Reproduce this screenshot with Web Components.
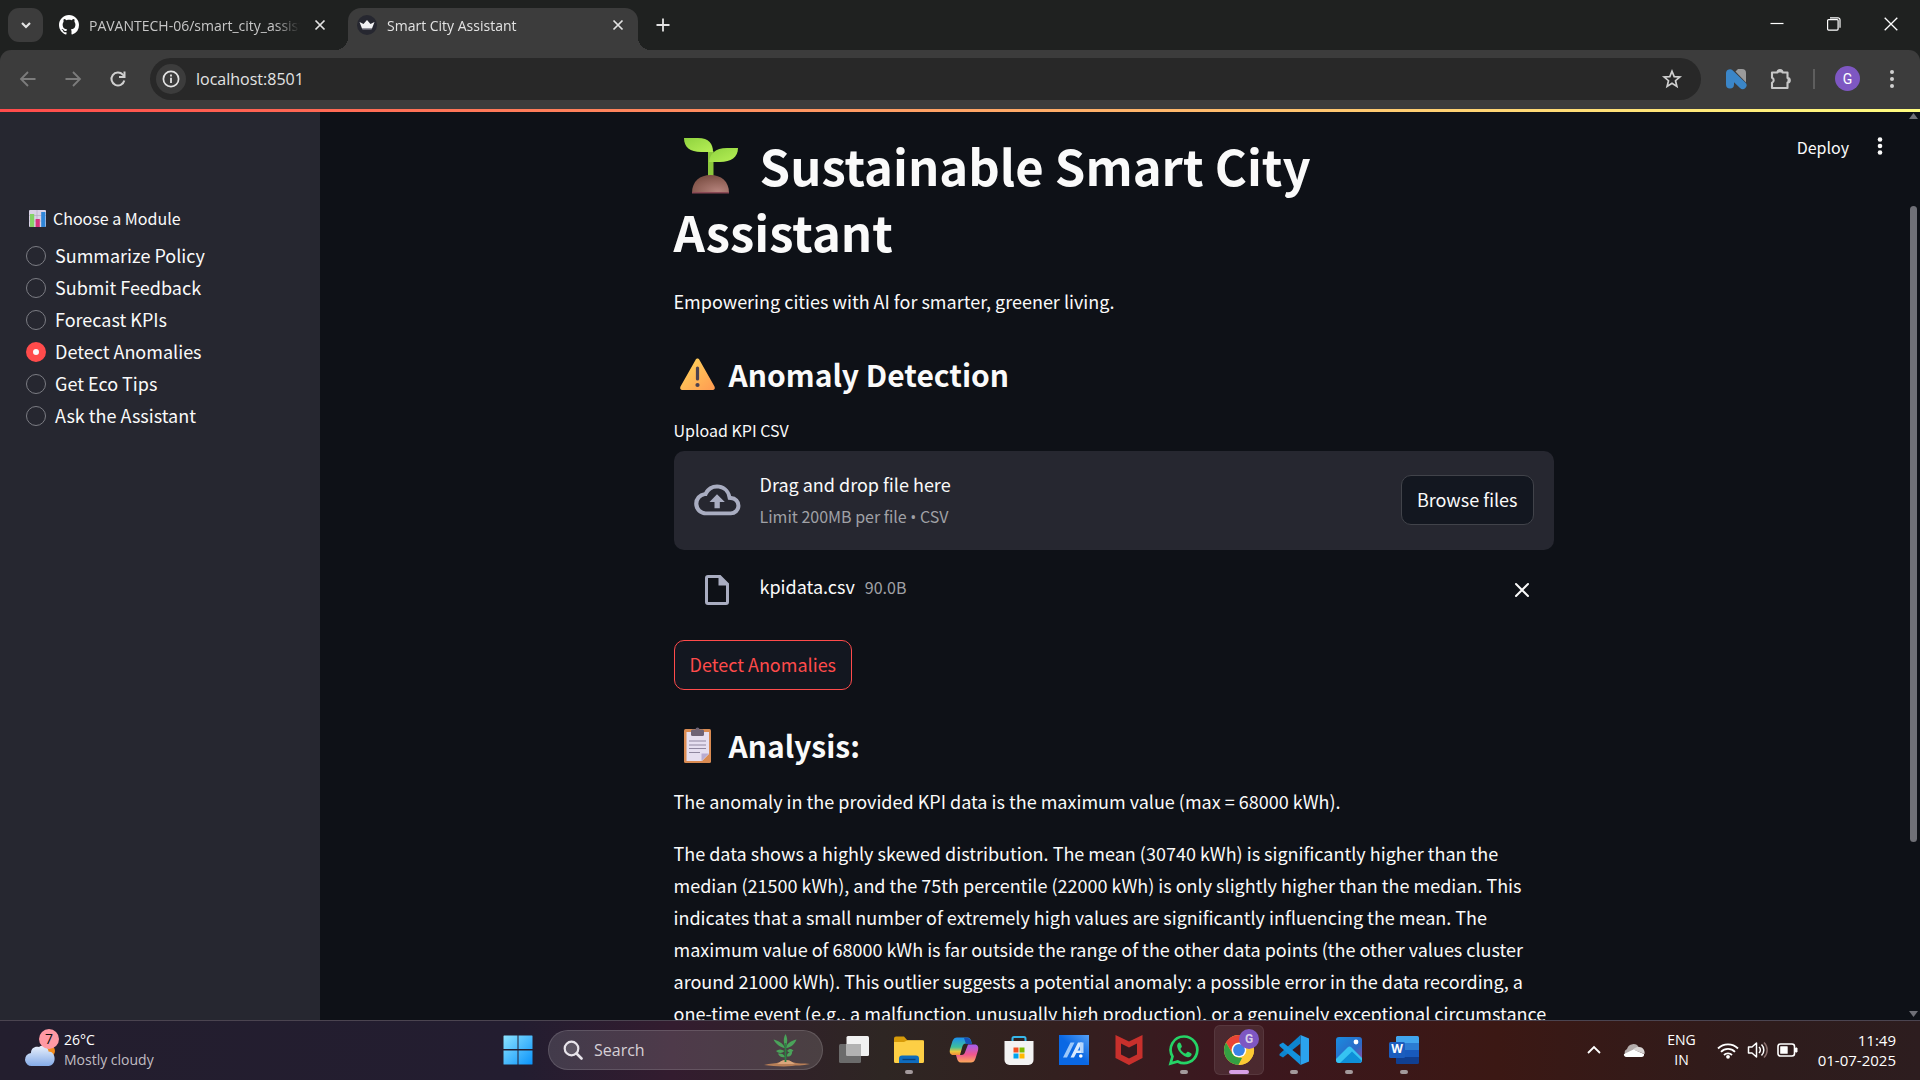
<!DOCTYPE html>
<html lang="en">
<head>
<meta charset="utf-8">
<title>Smart City Assistant</title>
<style>
html, body { margin: 0; height: 100%; }
body { background: #0e1117; overflow: hidden; }
</style>
</head>
<body>
<desktop-screen></desktop-screen>
<script>
const ICONS = {
  chevronDown: [16, 16, '<path d="M4 6l4 4 4-4" fill="none" stroke="#e3e3e3" stroke-width="2.2"/>'],
  github: [20, 20, '<path transform="scale(1.25)" fill="#fff" d="M8 0C3.58 0 0 3.58 0 8c0 3.54 2.29 6.53 5.47 7.59.4.07.55-.17.55-.38 0-.19-.01-.82-.01-1.49-2.01.37-2.53-.49-2.69-.94-.09-.23-.48-.94-.82-1.13-.28-.15-.68-.52-.01-.53.63-.01 1.08.58 1.23.82.72 1.21 1.87.87 2.33.66.07-.52.28-.87.51-1.07-1.78-.2-3.64-.89-3.64-3.95 0-.87.31-1.59.82-2.15-.08-.2-.36-1.02.08-2.12 0 0 .67-.21 2.2.82.64-.18 1.32-.27 2-.27s1.36.09 2 .27c1.53-1.04 2.2-.82 2.2-.82.44 1.1.16 1.92.08 2.12.51.56.82 1.27.82 2.15 0 3.07-1.87 3.75-3.65 3.95.29.25.54.73.54 1.48 0 1.07-.01 1.93-.01 2.2 0 .21.15.46.55.38A8.01 8.01 0 0 0 16 8c0-4.42-3.58-8-8-8z"/>'],
  crown: [20, 20, '<circle cx="10" cy="10" r="10" fill="#262730"/><path d="M2.500 7l4 2L10 5l3.500 4 4-2-2.500 6.500H5z" fill="#f2f2f4"/><path d="M5 13.500h10l-.5 1h-9z" fill="#9a9aa5"/>'],
  tabClose: [12, 12, '<path d="M1.500 1.500l9 9M10.500 1.500l-9 9" stroke="#e3e3e3" stroke-width="1.700"/>'],
  plus: [14, 14, '<path d="M7 .5v13M.5 7h13" stroke="#e3e3e3" stroke-width="1.800"/>'],
  min: [14, 14, '<path d="M.5 6.500h13" stroke="#fff" stroke-width="1.200"/>'],
  restore: [14, 14, '<rect x=".6" y="2.600" width="10.500" height="10.500" rx="1" fill="none" stroke="#fff" stroke-width="1.200"/><path d="M3 .8h8a2 2 0 0 1 2 2v8" fill="none" stroke="#fff" stroke-width="1.200"/>'],
  winClose: [14, 14, '<path d="M.7.7l12.600 12.600M13.300.7L.7 13.300" stroke="#fff" stroke-width="1.300"/>'],
  back: [16, 16, '<path d="M15.500 8H1.500M8 1L1 8l7 7" fill="none" stroke="#7c7c7c" stroke-width="1.800"/>'],
  forward: [16, 16, '<path d="M.5 8h14M8 1l7 7-7 7" fill="none" stroke="#7c7c7c" stroke-width="1.800"/>'],
  reload: [18, 18, '<path d="M15.300 10.500A6.500 6.500 0 1 1 13.800 4.600L15.500 6.300" fill="none" stroke="#d0d0d0" stroke-width="2"/><path d="M16.500 1.500v6.500H10V6h4.500V1.500z" fill="#d0d0d0"/>'],
  info: [30, 30, '<circle cx="15" cy="15" r="15" fill="#3c3c3c"/><circle cx="15" cy="15" r="7.600" fill="none" stroke="#e3e3e3" stroke-width="1.700"/><path d="M15 13.800v5.200M15 10.500v1.900" stroke="#e3e3e3" stroke-width="1.800"/>'],
  star: [20, 20, '<path d="M10 2.200l2.200 5.400 5.700.4-4.400 3.700 1.400 5.700-4.900-3.100-4.900 3.100 1.400-5.700L2.100 8l5.700-.4z" fill="none" stroke="#d0d0d0" stroke-width="1.700"/>'],
  nLogo: [20, 20, '<path d="M12 0h4a4 4 0 0 1 4 4v9.500L9.500 2.500z" fill="#9b9b9b"/><path d="M0 4.500A4 4 0 0 1 7.300 2L19.300 13.500A3.800 3.800 0 0 1 14 19L8 13.300V15.500A4 4 0 0 1 0 15.500z" fill="#3b86c8"/>'],
  puzzle: [22, 22, '<path d="M2 4.500h5.500a2.500 2.500 0 0 1 5 0H17.500V10a2.300 2.300 0 0 1 0 4.600V20H2v-5.200a2.700 2.700 0 0 0 0-5z" fill="none" stroke="#c7c7c7" stroke-width="2.100" stroke-linejoin="round"/><path d="M7.500 4.500a2.500 2.500 0 0 1 5 0zM17.500 10a2.300 2.300 0 0 1 0 4.600z" fill="#c7c7c7"/>'],
  dotsSmall: [6, 20, '<g fill="#d0d0d0"><circle cx="3" cy="3" r="2"/><circle cx="3" cy="10" r="2"/><circle cx="3" cy="17" r="2"/></g>'],
  dots: [6, 20, '<g fill="#fafafa"><circle cx="3" cy="3.500" r="2.300"/><circle cx="3" cy="10" r="2.300"/><circle cx="3" cy="16.500" r="2.300"/></g>'],
  chart: [17, 17, '<rect width="17" height="17" rx="1" fill="#d9d2e6"/><path d="M0 5.500h17M0 11h17M8 0v17" stroke="#b5adc6" stroke-width=".7"/><rect x="1" y="4" width="4.200" height="13" fill="#84d267"/><rect x="6.600" y="9" width="4.200" height="8" fill="#d6337d"/><rect x="12.200" y="2" width="4.200" height="15" fill="#2f86d8"/>'],
  seedling: [75, 58, '<defs><linearGradient id="a" x2="1" y2="1"><stop stop-color="#8fd23f"/><stop offset="1" stop-color="#b7f056"/></linearGradient><radialGradient id="b" cx=".7" cy=".9" r=".9"><stop stop-color="#b5837c"/><stop offset="1" stop-color="#7c4f44"/></radialGradient></defs><g transform="translate(-1 1)"><path d="M35 14h5.500V42H35z" fill="#8cc93c"/><path d="M11 1h14C36 1 40 7 40 15H28C17 15 11 10 11 1z" fill="url(#a)"/><path d="M65 11H54C42 11 37 17 36 25H47C58 25 65 20 65 11z" fill="url(#a)"/><path d="M19 56C19 44 27 38 37.500 38S56 44 56 56z" fill="url(#b)"/><path d="M19 55h37v1.500H19z" fill="#8a4955"/></g>'],
  warning: [48, 36, '<defs><linearGradient id="a" x2="1" y2="1"><stop stop-color="#ffd95b"/><stop offset="1" stop-color="#ff9a52"/></linearGradient></defs><g transform="translate(-1 1)"><path d="M24.500 1.500c1 0 1.500.5 2 1.500l15 26.500c1 2-.2 3.500-1.800 3.500H9.300c-1.600 0-2.800-1.500-1.800-3.500L22.500 3c.5-1 1-1.500 2-1.500z" fill="url(#a)"/><path d="M24.500 11v11" stroke="#4b4150" stroke-width="3.200" stroke-linecap="round"/><circle cx="24.500" cy="28" r="2.100" fill="#4b4150"/></g>'],
  clipboard: [48, 36, '<g transform="translate(-1 1)"><rect x="11" y="1" width="27" height="34" rx="1.500" fill="#d98b52"/><path d="M13.500 4h22.500v22l-7 7H13.500z" fill="#e6dff0"/><path d="M28.500 33v-7.500H36z" fill="#b9acd0"/><rect x="18" y="1.500" width="13" height="6.500" rx="1.500" fill="#6e6375"/><circle cx="24.500" cy="1.500" r="2" fill="#6e6375"/><path d="M16 13h17M16 17h17M16 20.500h17M16 24.500h11" stroke="#9088a0" stroke-width="1.200"/></g>'],
  cloudUp: [46, 32, '<path d="M37.100 12.100A14.380 14.380 0 0 0 23 .5C17.500.5 12.700 3.600 10.300 8.200A11.500 11.500 0 0 0 .2 19.700C.2 26.100 5.400 31.300 11.700 31.300h24.900a9.600 9.600 0 0 0 .5-19.200zM36.500 27.400H11.700a7.700 7.700 0 0 1-.8-15.300l2-.2.9-1.800a10.500 10.500 0 0 1 19.600 2.800l.6 2.900 2.900.2a5.700 5.700 0 0 1-.4 11.400zM15.500 18h5v6.200h5.300V18h5L23 10.300z" fill="#a9adc1"/>'],
  file: [24, 30, '<path d="M3 0h12.500L24 8.500V27a3 3 0 0 1-3 3H3a3 3 0 0 1-3-3V3a3 3 0 0 1 3-3zM3 3v24h18V10.500h-7.500V3z" fill="#a9adc1"/>'],
  remove: [14, 14, '<path d="M1 1l12 12M13 1L1 13" stroke="#fafafa" stroke-width="2" stroke-linecap="round"/>'],
  up: [11, 7, '<path d="M5.500 1L10 7H1z" fill="#6f7077"/>'],
  down: [11, 7, '<path d="M5.500 6L10 0H1z" fill="#6f7077"/>'],
  weather: [32, 38, '<defs><linearGradient id="a" y2="1" x2="0"><stop stop-color="#e9f0fb"/><stop offset="1" stop-color="#84abe8"/></linearGradient></defs><circle cx="24" cy="20" r="6" fill="#f28a1c"/><path d="M7 35a6.500 6.500 0 0 1-1-13C6 17 10 15 14 16c3-2.500 9-1 9.500 4.500 8 0 8.500 14 0 14.500z" fill="url(#a)"/>'],
  windows: [30, 30, '<defs><linearGradient id="a" x2="1" y2="1"><stop stop-color="#8ce3ff"/><stop offset="1" stop-color="#0a93fa"/></linearGradient></defs><path d="M1 .5h13.500V14H.5V1zM15.500.5H29a.5.500 0 0 1 .5.5V14h-14zM.5 15.500h14v14H1a.5.500 0 0 1-.5-.5zM15.500 15.500h14V29a.5.500 0 0 1-.5.5H15.500z" fill="url(#a)"/>'],
  search: [20, 20, '<circle cx="8.500" cy="8.500" r="6.800" fill="#ffffff22" stroke="#e8e4ea" stroke-width="2.200"/><path d="M13.500 13.500l5 5" stroke="#e8e4ea" stroke-width="2.600" stroke-linecap="round"/>'],
  plant: [48, 34, '<path d="M1 32c6-2 12-1 16-3 4-3 9-2 12 0 5 2 12 1 18 2-8 2-14 1-18 2-9 1-20 0-28-1z" fill="#b87f57"/><path d="M17 29c4-3 9-2 12 0l3 2H14z" fill="#d9a57c"/><g fill="#4aa35a"><path d="M22.500 14C20 9 20.500 5 22.500 1c2 4 2.500 8 0 13z"/><path d="M22 15C17 14.500 13 11 10.500 6.500c5 1.500 9.500 3.500 11.500 8.500zM23 15c1-5 5-7 10.500-8.500-2 4.500-5 8-10.500 8.500z"/><path d="M21.500 18c-3-2-6-2-8.500 0 2.500 2.500 6 2.500 8.500 0zM24 18c2-3 4.500-2.500 6.500-.5-2 2.500-4.500 2.500-6.500.5zM22 24c-1-3-4-4-7-3.500 1 3 4 4.500 7 3.500zM24 23.500c0-3.500 2-4.500 5-5 .5 3-1.500 5.500-5 5z"/></g><path d="M22.500 10v19" stroke="#2c8142" stroke-width="1.800"/>'],
  taskview: [30, 28, '<rect x="0" y="8" width="22" height="19" rx="1.500" fill="#6b6b6b"/><rect x="7.500" y="0" width="22.500" height="20" rx="1.500" fill="#f1f1f1"/><rect x="7.500" y="8" width="14.500" height="12" fill="#b2b2b2"/>'],
  folder: [30, 28, '<path d="M0 2.500A2 2 0 0 1 2 .5h8l3.500 4H30V12H0z" fill="#d79b09"/><path d="M0 6h10l3.500-1.800H28.500A1.500 1.500 0 0 1 30 5.700V25.500a1.500 1.500 0 0 1-1.500 1.500H1.500A1.500 1.500 0 0 1 0 25.500z" fill="#fdcf45"/><path d="M5 27v-4.500A3 3 0 0 1 8 19.500H22a3 3 0 0 1 3 3V27z" fill="#0f6cbd"/><path d="M8.500 23.500h13" stroke="#0a3f78" stroke-width="1.300"/>'],
  copilot: [30, 28, '<defs><linearGradient id="a" x2="0" y2="1"><stop stop-color="#1c8ff0"/><stop offset=".55" stop-color="#3fbf9b"/><stop offset=".8" stop-color="#e9c63c"/><stop offset="1" stop-color="#f48d3a"/></linearGradient><linearGradient id="b" x2="0" y2="1"><stop stop-color="#a15df0"/><stop offset=".55" stop-color="#f0568e"/><stop offset="1" stop-color="#fba95a"/></linearGradient></defs><path d="M8 1.500h10.500c2 0 3 1.500 3.500 3l.8 3H17c-2 0-3 1-3.600 3L11 19H4.500C1 19 .3 16.500 1 13L3.500 5C4.500 2.500 6 1.500 8 1.500z" fill="url(#a)"/><path d="M22 26.500H12c-2.500 0-3.500-2-4-4l-1-3.500h5.500c2 0 3-1 3.600-3L19 8.500h6.500c3.500 0 4.200 2.500 3.500 6L26.500 22.500C25.500 25.500 24 26.500 22 26.500z" fill="url(#b)"/><path d="M15 2h3.500c2 0 3 1.500 3.500 3l.8 3H17z" fill="#1750b8"/>'],
  store: [30, 30, '<path d="M8.500 8V3.500A1.500 1.500 0 0 1 10 2h10a1.500 1.500 0 0 1 1.500 1.500V8" fill="none" stroke="#36b7ea" stroke-width="2"/><path d="M.5 6h29v19a5 5 0 0 1-5 5h-19a5 5 0 0 1-5-5z" fill="#f3f3f3"/><path fill="#f25022" d="M9.500 12.500h5v5h-5z"/><path fill="#7fba00" d="M15.500 12.500h5v5h-5z"/><path fill="#00a4ef" d="M9.500 18.500h5v5h-5z"/><path fill="#ffb900" d="M15.500 18.500h5v5h-5z"/>'],
  myasus: [30, 30, '<defs><linearGradient id="a" x1="0" y1="1" x2="1" y2="0"><stop offset=".5" stop-color="#0a68e4"/><stop offset="1" stop-color="#55a0f5"/></linearGradient></defs><path fill="url(#a)" d="M0 0h30v30H0z"/><path d="M4 22.500L11.500 7.500h4L8 22.500z" fill="#9cc8fb"/><path d="M11.500 22.500L19 7.500h4L15 22.500z" fill="#d9eafe"/><path d="M21 7.500h3.500v10.500H21z" fill="#b5d6fc"/><path d="M16 15.500h6v2.500h-7z" fill="#d9eafe"/><circle cx="21.800" cy="21" r="1.800" fill="#fff"/>'],
  mcafee: [28, 30, '<path d="M.5 0L14 6.500 27.500 0V23L14 30 .5 23z" fill="#c8302c"/><path d="M6 8.500l8 4 8-4V19.500l-8 4-8-4z" fill="#341a1f"/>'],
  whatsapp: [30, 30, '<path d="M15 1.500a13.300 13.300 0 0 0-11.500 20L1.500 28.500l7.200-2A13.300 13.300 0 1 0 15 1.500z" fill="none" stroke="#25d366" stroke-width="2.700"/><path d="M10.700 7.500c-1.500 0-3 2-2.500 4.300 1 5 6 9.700 10.500 10.400 2 .2 4-1.300 4-3.200 0-.7-3.500-2.500-4.200-2.300-.7.300-1.300 2-2 1.900-2-.5-4.300-2.800-5-4.600-.2-.7 1.500-1.500 1.400-2.500-.2-1-1.300-4-2.200-4z" fill="#25d366"/>'],
  chrome: [30, 30, '<circle cx="15" cy="15" r="15" fill="#fcc934"/><path d="M2 7.500A15 15 0 0 1 28 7.500H15a7.500 7.500 0 0 0-6.500 11.200z" fill="#ea4335"/><path d="M2 7.500L8.500 18.700A7.500 7.500 0 0 0 15 22.500l3 .5L14.500 30A15 15 0 0 1 2 7.500z" fill="#34a043"/><path d="M15 7.500H28A15 15 0 0 1 14.500 30l7-11.300A7.500 7.500 0 0 0 15 7.500z" fill="#fcc934"/><circle cx="15" cy="15" r="7.300" fill="#fff"/><circle cx="15" cy="15" r="5.900" fill="#3b82e6"/>'],
  vscode: [30, 30, '<path d="M21.500 0L30 3.500V26.500L21.500 30z" fill="#2ba3ee"/><path d="M21.500 0v8.500L4 22.500.5 20.500V19z" fill="#0d84cf"/><path d="M21.500 30v-8.500L4 7.500.5 9.500V11z" fill="#1391dd"/>'],
  photos: [28, 28, '<defs><linearGradient id="a" x2="1" y2="1"><stop stop-color="#1a8de0"/><stop offset=".6" stop-color="#2a6ac8"/><stop offset="1" stop-color="#9b4c9c"/></linearGradient></defs><rect x="1" y="1" width="26" height="26" rx="3" fill="url(#a)"/><path d="M1 23L12.500 11.500a3 3 0 0 1 4 0L27 22v2a3 3 0 0 1-3 3H4a3 3 0 0 1-3-3z" fill="#36c3f2"/><path d="M5 27l12-11.500L27 25a3 3 0 0 1-3 2z" fill="#0e8fd8"/><circle cx="21" cy="6" r="2.400" fill="#fff"/>'],
  word: [30, 28, '<path fill="#41a5ee" d="M8 0h20.500A1.500 1.500 0 0 1 30 1.500V7H7V1z"/><path fill="#2b7cd3" d="M7 7h23v7H7z"/><path fill="#185abd" d="M7 14h23v7H7z"/><path fill="#103f91" d="M7 21h23v5.500a1.500 1.500 0 0 1-1.500 1.500H8a1 1 0 0 1-1-1z"/><rect x="0" y="6" width="16" height="16" rx="1.500" fill="#1b5dbe"/>'],
  trayUp: [14, 8, '<path d="M1 7l6-6 6 6" fill="none" stroke="#fff" stroke-width="1.800"/>'],
  onedrive: [22, 16, '<path d="M4 7a6.500 6.500 0 0 1 12-1.500L8 12H2a4 4 0 0 1 2-5z" fill="#b3acab"/><path d="M16 5c5 0 6 5 5.500 7L10 7.500C12 5.500 14 5 16 5z" fill="#d8d4d3"/><path d="M1 12L10.500 7.500 21 12c.5 2-1 3-2.500 3h-15C1.500 15 .5 13.500 1 12z" fill="#fff"/>'],
  wifi: [22, 18, '<g fill="none" stroke="#fff" stroke-width="1.800"><path d="M1 7.500a14 14 0 0 1 20 0M4 10.800a9.800 9.800 0 0 1 14 0M7 14a5.700 5.700 0 0 1 8 0"/></g><circle cx="11" cy="15.800" r="1.900" fill="#fff"/>'],
  speaker: [22, 18, '<path d="M1.500 6h3.500l4.500-4v14L5 12H1.500z" fill="none" stroke="#fff" stroke-width="1.500" stroke-linejoin="round"/><path d="M12 6a4 4 0 0 1 0 6M14.500 3.500a7.700 7.700 0 0 1 0 11" fill="none" stroke="#fff" stroke-width="1.500"/><path d="M17 1.500a10.500 10.500 0 0 1 0 15" fill="none" stroke="#8a6f6d" stroke-width="1.500"/>'],
  battery: [22, 16, '<rect x="1" y="2" width="16.500" height="12" rx="2.500" fill="none" stroke="#fff" stroke-width="1.600"/><rect x="3.200" y="4.200" width="7.500" height="7.600" rx=".5" fill="#fff"/><path d="M18.500 6h1.500v4h-1.500z" fill="#fff" stroke="#fff"/>']
};

const define = (name, css, html) => {
  customElements.define(name, class extends HTMLElement {
    constructor() {
      super();
      this.attachShadow({ mode: 'open' });
    }
    connectedCallback() {
      if (this.shadowRoot.childNodes.length) return;
      const t = document.createElement('template');
      t.innerHTML = '<style>*{box-sizing:border-box}button,input{font:inherit;color:inherit;margin:0}' + css + '</style>' +
        (typeof html === 'function' ? html(this) : html);
      this.shadowRoot.append(t.content.cloneNode(true));
    }
  });
};

define('ui-icon', ':host{display:inline-block;flex:none;line-height:0}svg{display:block;overflow:visible}', el => {
  const [w, h, body] = ICONS[el.getAttribute('name')];
  return `<svg width="${w}" height="${h}" viewBox="0 0 ${w} ${h}" aria-hidden="true">${body}</svg>`;
});

/* Browser chrome */
define('browser-tab', `
  :host{display:flex;align-items:center;gap:10px;width:290px;height:42px;padding:0 10px 8px 9px;box-sizing:border-box;color:#c7c7c7}
  :host([active]){position:relative;background:#3c3c3c;border-radius:13px 13px 0 0;color:#e3e3e3}
  :host([active])::before,:host([active])::after{content:"";position:absolute;bottom:0;width:13px;height:13px}
  :host([active])::before{left:-13px;background:radial-gradient(circle at 0 0,transparent 13px,#3c3c3c 13px)}
  :host([active])::after{right:-13px;background:radial-gradient(circle at 100% 0,transparent 13px,#3c3c3c 13px)}
  .title{flex:1;min-width:0;white-space:nowrap;overflow:hidden;-webkit-mask-image:linear-gradient(90deg,#000 88%,transparent)}
  button{display:flex;padding:4px;border:0;background:none}`,
  el => `<ui-icon name="${el.getAttribute('icon')}"></ui-icon><span class="title"><slot></slot></span>
  <button aria-label="Close tab"><ui-icon name="tabClose"></ui-icon></button>`);

define('tab-strip', `
  :host{display:flex;height:50px;padding:8px 0 0 8px;box-sizing:border-box;background:#1f2120;font-size:14px}
  .list{width:35px;height:34px;margin-right:7px;border:0;border-radius:11px;background:#3c3c3c;display:grid;place-items:center}
  .tabs{display:flex;gap:8px}
  .add{width:50px;height:34px;padding:0;border:0;background:none;display:grid;place-items:center}
  .win{display:flex;margin:-8px 0 0 auto;padding-right:1px}
  .win button{width:57px;height:48px;border:0;background:none;display:grid;place-items:center}`, `
  <button class="list" aria-label="Search tabs"><ui-icon name="chevronDown"></ui-icon></button>
  <div class="tabs"><browser-tab icon="github">PAVANTECH-06/smart_city_assistant</browser-tab>
  <browser-tab icon="crown" active>Smart City Assistant</browser-tab></div>
  <button class="add" aria-label="New tab"><ui-icon name="plus"></ui-icon></button>
  <div class="win"><button aria-label="Minimize"><ui-icon name="min"></ui-icon></button>
  <button aria-label="Restore"><ui-icon name="restore"></ui-icon></button>
  <button aria-label="Close"><ui-icon name="winClose"></ui-icon></button></div>`);

define('address-bar', `
  :host{display:block;background:#1f2120}
  .bar{display:flex;align-items:center;height:59px;padding:0 13px 2px 5px;background:#3c3c3c;border-radius:11px 11px 0 0}
  button{width:45px;height:40px;padding:0;border:0;background:none;display:grid;place-items:center}
  .omni{flex:1;display:flex;align-items:center;height:42px;margin:0 12px 0 10px;padding:0 7px 0 6px;border-radius:21px;background:#282828}
  input{flex:1;min-width:0;margin-left:10px;padding:0;border:0;outline:0;background:none;color:#e3e3e3;font-size:16px}
  i{width:2px;height:20px;margin:0 10px;background:#5e5e5e}
  .me{width:25px;height:25px;margin:0 10px;border-radius:50%;background:#7e57c2;color:#fff;font:14px Roboto,sans-serif}
  .menu{width:31px;margin-left:6px}`, `
  <div class="bar">
  <button aria-label="Back"><ui-icon name="back"></ui-icon></button>
  <button aria-label="Forward"><ui-icon name="forward"></ui-icon></button>
  <button aria-label="Reload"><ui-icon name="reload"></ui-icon></button>
  <div class="omni"><ui-icon name="info"></ui-icon><input type="text" aria-label="Address" value="localhost:8501">
  <button aria-label="Bookmark"><ui-icon name="star"></ui-icon></button></div>
  <button aria-label="Extension"><ui-icon name="nLogo"></ui-icon></button>
  <button aria-label="Extensions"><ui-icon name="puzzle"></ui-icon></button><i></i>
  <button class="me" aria-label="Profile">G</button>
  <button class="menu" aria-label="Menu"><ui-icon name="dotsSmall"></ui-icon></button></div>`);

/* Application */
const MODULES = ['Summarize Policy', 'Submit Feedback', 'Forecast KPIs', 'Detect Anomalies', 'Get Eco Tips', 'Ask the Assistant'];
define('module-sidebar', `
  :host{display:block;flex:none;width:320px;padding:93px 26px;box-sizing:border-box;background:#262730}
  fieldset{margin:0;padding:0;border:0}
  legend{display:flex;align-items:center;gap:7px;height:26px;padding:0 3px;margin-bottom:8px;font-size:16px}
  label{display:flex;align-items:center;gap:9px;height:32px}
  input{appearance:none;width:20px;height:20px;margin-top:2px;border:1px solid #7b7c83;border-radius:50%}
  input:checked{border:7px solid #ff4b4b;background:#fafafa}`,
  `<fieldset><legend><ui-icon name="chart"></ui-icon>Choose a Module</legend>${MODULES.map(m =>
    `<label><input type="radio" name="module"${m === 'Detect Anomalies' ? ' checked' : ''}>${m}</label>`).join('')}</fieldset>`);

define('app-button', `
  :host{display:inline-block;flex:none}
  button{display:block;height:50px;padding:0 15px 3px;border:1px solid #41434a;border-radius:10px;background:#131720}
  :host([primary]) button{border-color:#ff4b4b;color:#ff4b4b}`,
  '<button type="button"><slot></slot></button>');

define('section-title', `
  :host{display:block}
  h2{margin:0;font-size:30px;line-height:42px;font-weight:600}
  ui-icon{vertical-align:-5px;margin-right:7px}`,
  el => `<h2><ui-icon name="${el.getAttribute('icon')}"></ui-icon><slot></slot></h2>`);

define('file-uploader', `
  :host{display:block}
  .label{display:block;height:26px;line-height:26px;margin-bottom:8px;font-size:16px}
  input{position:absolute;width:1px;height:1px;opacity:0}
  .drop{position:relative;display:flex;align-items:center;gap:20px;height:99px;padding:0 20px 1px;border-radius:10px;background:#262730}
  .text{flex:1;line-height:32px}
  .muted{font-size:16px;color:#a0a1a6}
  .text .muted{display:block}
  .dot{font-family:"Open Sans",sans-serif}
  .item{display:flex;align-items:center;height:40px;margin-top:20px;padding:0 19px 0 20px}
  .item .icon{width:46px;margin-right:20px;display:grid;place-items:center}
  .name{flex:1;align-self:flex-start;line-height:32px}
  .name .muted{margin-left:10px}
  button{width:26px;height:26px;padding:0;border:0;background:none;display:grid;place-items:center}`, `
  <label class="label" for="f">Upload KPI CSV</label>
  <div class="drop"><input id="f" type="file" accept=".csv"><ui-icon name="cloudUp"></ui-icon>
  <div class="text">Drag and drop file here<span class="muted">Limit 200MB per file <span class="dot">•</span> CSV</span></div>
  <app-button>Browse files</app-button></div>
  <div class="item"><span class="icon"><ui-icon name="file"></ui-icon></span>
  <div class="name">kpidata.csv<span class="muted">90.0B</span></div>
  <button aria-label="Remove file"><ui-icon name="remove"></ui-icon></button></div>`);

define('scroll-rail', `
  :host{display:flex;flex:none;flex-direction:column;align-items:center;width:13px;box-sizing:border-box;padding-bottom:2px}
  .track{flex:1;width:7px;padding-top:87px}
  .thumb{height:79%;border-radius:4px;background:#6f7077}`,
  '<ui-icon name="up"></ui-icon><div class="track"><div class="thumb"></div></div><ui-icon name="down"></ui-icon>');

define('smart-city-app', `
  :host{display:flex;flex:1;min-height:0;position:relative;background:#0e1117;color:#fafafa;font:18px "Noto Sans CJK SC","Liberation Sans",sans-serif}
  main{flex:1;min-width:0;overflow:hidden}
  .block{max-width:880px;margin:0 auto;padding-top:20px}
  h1{margin:0 0 21px;padding-right:40px;font-size:49px;line-height:66px;font-weight:700}
  h1 ui-icon{vertical-align:-8px}
  p{margin:0 0 20px;line-height:32px}
  .intro{margin-bottom:36px}
  section-title{margin-bottom:19px}
  .run{display:block;margin:30px 0 34px}
  .top{position:absolute;top:15px;right:23px;display:flex;align-items:center;font-size:16px}
  .top button{height:40px;padding:0 14px 1px;border:0;background:none}
  .top .more{padding:2px 14px 0}
  file-uploader{margin-top:22px}`, `
  <module-sidebar></module-sidebar>
  <main><div class="block">
  <h1><ui-icon name="seedling"></ui-icon> Sustainable Smart City Assistant</h1>
  <p class="intro">Empowering cities with AI for smarter, greener living.</p>
  <section-title icon="warning">Anomaly Detection</section-title>
  <file-uploader></file-uploader>
  <app-button class="run" primary>Detect Anomalies</app-button>
  <section-title icon="clipboard">Analysis:</section-title>
  <p>The anomaly in the provided KPI data is the maximum value (max = 68000 kWh).</p>
  <p>The data shows a highly skewed distribution. The mean (30740 kWh) is significantly higher than the median (21500 kWh), and the 75th percentile (22000 kWh) is only slightly higher than the median. This indicates that a small number of extremely high values are significantly influencing the mean. The maximum value of 68000 kWh is far outside the range of the other data points (the other values cluster around 21000 kWh). This outlier suggests a potential anomaly: a possible error in the data recording, a one-time event (e.g., a malfunction, unusually high production), or a genuinely exceptional circumstance</p>
  </div></main>
  <scroll-rail></scroll-rail>
  <div class="top"><button>Deploy</button><button class="more" aria-label="App menu"><ui-icon name="dots"></ui-icon></button></div>`);

/* Taskbar */
define('task-button', `
  :host{display:block;flex:none}
  button{position:relative;display:grid;place-items:center;width:50px;height:50px;padding:0;border:1px solid transparent;border-radius:6px;background:none}
  :host([running]) button::after{content:"";position:absolute;bottom:0;left:20px;width:8px;height:4px;border-radius:2px;background:#a39a9c}
  :host([active]) button{background:#ffffff14;border-color:#ffffff12}
  :host([active]) button::after{left:14px;width:20px;background:#d9a0e6}
  slot{display:block;position:absolute}
  ::slotted(.who){position:absolute;left:0;top:-21px;width:20px;height:20px;border-radius:50%;background:#7e57c2;color:#d9d0e8;font:bold 12px/20px Roboto,sans-serif;text-align:center}
  ::slotted(.letter){position:absolute;left:-13px;top:-9px;width:12px;color:#fff;font:bold 12px/16px "Open Sans",sans-serif;text-align:center}`,
  el => `<button aria-label="${el.getAttribute('name')}"><ui-icon name="${el.getAttribute('icon')}"></ui-icon><slot></slot></button>`);

define('task-bar', `
  :host{display:grid;grid-template-columns:1fr auto 1fr;align-items:center;height:60px;padding:0 0 2px 2px;box-sizing:border-box;border-top:1px solid #4b4450;
    background:linear-gradient(90deg,#231e2e 0,#231d30 27%,#331c2f 35%,#2e2623 46%,#33201f 55%,#3c171f 64%,#3b1814 78%,#2e1c1c 92%,#2d1d1f);color:#fff;font-size:14px;line-height:20px}
  .weather{display:flex;align-items:center;gap:7px;padding-left:23px}
  .pic{position:relative;display:flex}
  .badge{position:absolute;left:14px;top:-2px;width:20px;height:20px;border-radius:50%;background:#ff99a4;color:#111;line-height:20px;text-align:center}
  .muted{display:block;color:#c0bcc2}
  .mid,.tray{display:flex;align-items:center;gap:5px}
  .find{display:flex;align-items:center;width:275px;height:40px;margin-right:1px;padding:0 11px 0 14px;border:1px solid #ffffff22;border-radius:20px;background:#ffffff22}
  .find input{flex:1;min-width:0;margin-left:11px;padding:0;border:0;outline:0;background:none;font-size:16px;color:#d6d0d6}
  .tray{justify-content:flex-end;gap:8px;padding-right:24px}
  .lang{margin:0 13px 0 14px;text-align:center}
  .time{margin-left:11px;text-align:right;font-size:15px}
  .tray .one{margin-left:14px}`, `
  <div class="weather"><span class="pic"><ui-icon name="weather"></ui-icon><span class="badge">7</span></span><div>26°C<span class="muted">Mostly cloudy</span></div></div>
  <div class="mid">
  <task-button name="Start" icon="windows"></task-button>
  <label class="find"><ui-icon name="search"></ui-icon><input type="text" aria-label="Search" value="Search"><ui-icon name="plant"></ui-icon></label>
  <task-button name="Task view" icon="taskview"></task-button>
  <task-button name="File Explorer" icon="folder" running></task-button>
  <task-button name="Copilot" icon="copilot"></task-button>
  <task-button name="Store" icon="store"></task-button>
  <task-button name="MyASUS" icon="myasus"></task-button>
  <task-button name="McAfee" icon="mcafee"></task-button>
  <task-button name="WhatsApp" icon="whatsapp" running></task-button>
  <task-button name="Chrome" icon="chrome" running active><span class="who">G</span></task-button>
  <task-button name="VS Code" icon="vscode" running></task-button>
  <task-button name="Photos" icon="photos" running></task-button>
  <task-button name="Word" icon="word" running><span class="letter">W</span></task-button>
  </div>
  <div class="tray"><ui-icon name="trayUp"></ui-icon><ui-icon class="one" name="onedrive"></ui-icon>
  <div class="lang">ENG<br>IN</div>
  <ui-icon name="wifi"></ui-icon><ui-icon name="speaker"></ui-icon><ui-icon name="battery"></ui-icon>
  <div class="time">11:49<br>01-07-2025</div></div>`);

define('desktop-screen', `
  :host{display:flex;flex-direction:column;height:100vh;font-family:"Open Sans","Noto Sans",sans-serif}
  .line{flex:none;height:3px;background:linear-gradient(90deg,#ff4b4b,#fffd80)}
  tab-strip,address-bar,task-bar{flex:none}`,
  '<tab-strip></tab-strip><address-bar></address-bar><div class="line"></div><smart-city-app></smart-city-app><task-bar></task-bar>');
</script>
</body>
</html>
